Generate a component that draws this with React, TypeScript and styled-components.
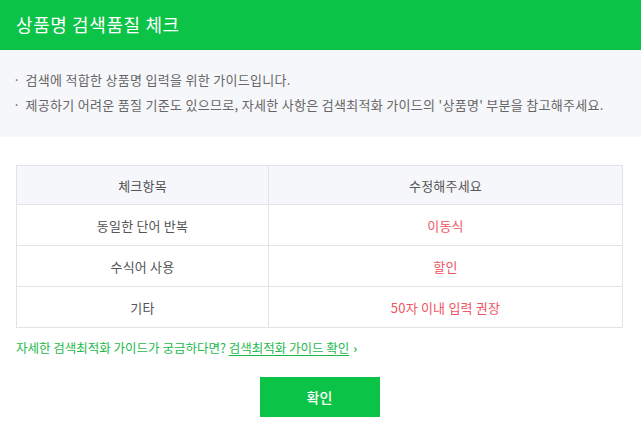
import styled, { createGlobalStyle } from 'styled-components';

const GlobalStyle = createGlobalStyle`
  * { box-sizing: border-box; }
  body {
    margin: 0;
    background: #ffffff;
    font-family: "Noto Sans CJK KR", "Noto Sans", sans-serif;
  }
`;

const Modal = styled.div`
  width: 641px;
  height: 441px;
  background: #fff;
  display: flex;
  flex-direction: column;
`;

const Header = styled.header`
  height: 50px;
  background: #0bc346;
  color: #fff;
  display: flex;
  align-items: center;
  padding: 0 16px 2px;
  font-size: 18px;
  font-weight: 400;
  letter-spacing: 0.6px;
`;

const Notice = styled.ul`
  margin: 0;
  height: 87px;
  background: #f6f7fa;
  list-style: none;
  padding: 20px 13px 0;
  display: flex;
  flex-direction: column;
  gap: 5px;

  & > li {
    font-size: 13px;
    line-height: 20px;
    letter-spacing: 0.3px;
    color: #666;
    display: flex;
    gap: 5px;
  }

  & > li::before {
    content: "·";
  }
`;

const Body = styled.div`
  padding: 28px 18px 0 16px;
  display: flex;
  flex-direction: column;
`;

const Table = styled.table`
  width: 607px;
  border-collapse: collapse;
  font-size: 13px;
  letter-spacing: 0.2px;
  color: #555;

  th, td {
    border: 1px solid #e1e3e8;
    text-align: center;
    font-weight: 400;
    height: 41px;
  }

  th {
    background: #f6f7fa;
    height: 39px;
  }

  th:first-child, td:first-child {
    width: 252px;
  }
`;

const Fix = styled.td`
  color: #ef5562;
`;

const Help = styled.p`
  margin: 12px 0 0;
  font-size: 12.5px;
  line-height: 16px;
  color: #1cb94c;

  a {
    color: inherit;
    text-decoration: underline;
    text-underline-offset: 2px;
  }
`;

const Chevron = styled.span`
  margin-left: 4px;
  font-size: 12px;
  font-weight: 700;
`;

const Actions = styled.div`
  display: flex;
  justify-content: center;
  padding-top: 21px;
`;

const Button = styled.button`
  width: 120px;
  height: 40px;
  border: none;
  background: #0bc346;
  color: #fff;
  font-family: inherit;
  font-size: 14px;
  font-weight: 500;
  cursor: pointer;
`;

const rows = [
  { item: '동일한 단어 반복', fix: '이동식' },
  { item: '수식어 사용', fix: '할인' },
  { item: '기타', fix: '50자 이내 입력 권장' },
];

export default function App() {
  return (
    <>
      <GlobalStyle />
      <Modal>
        <Header>상품명 검색품질 체크</Header>
        <Notice>
          <li>검색에 적합한 상품명 입력을 위한 가이드입니다.</li>
          <li>제공하기 어려운 품질 기준도 있으므로, 자세한 사항은 검색최적화 가이드의 '상품명' 부분을 참고해주세요.</li>
        </Notice>
        <Body>
          <Table>
            <thead>
              <tr>
                <th>체크항목</th>
                <th>수정해주세요</th>
              </tr>
            </thead>
            <tbody>
              {rows.map((r) => (
                <tr key={r.item}>
                  <td>{r.item}</td>
                  <Fix>{r.fix}</Fix>
                </tr>
              ))}
            </tbody>
          </Table>
          <Help>
            자세한 검색최적화 가이드가 궁금하다면? <a href="#">검색최적화 가이드 확인</a>
            <Chevron>›</Chevron>
          </Help>
          <Actions>
            <Button>확인</Button>
          </Actions>
        </Body>
      </Modal>
    </>
  );
}
